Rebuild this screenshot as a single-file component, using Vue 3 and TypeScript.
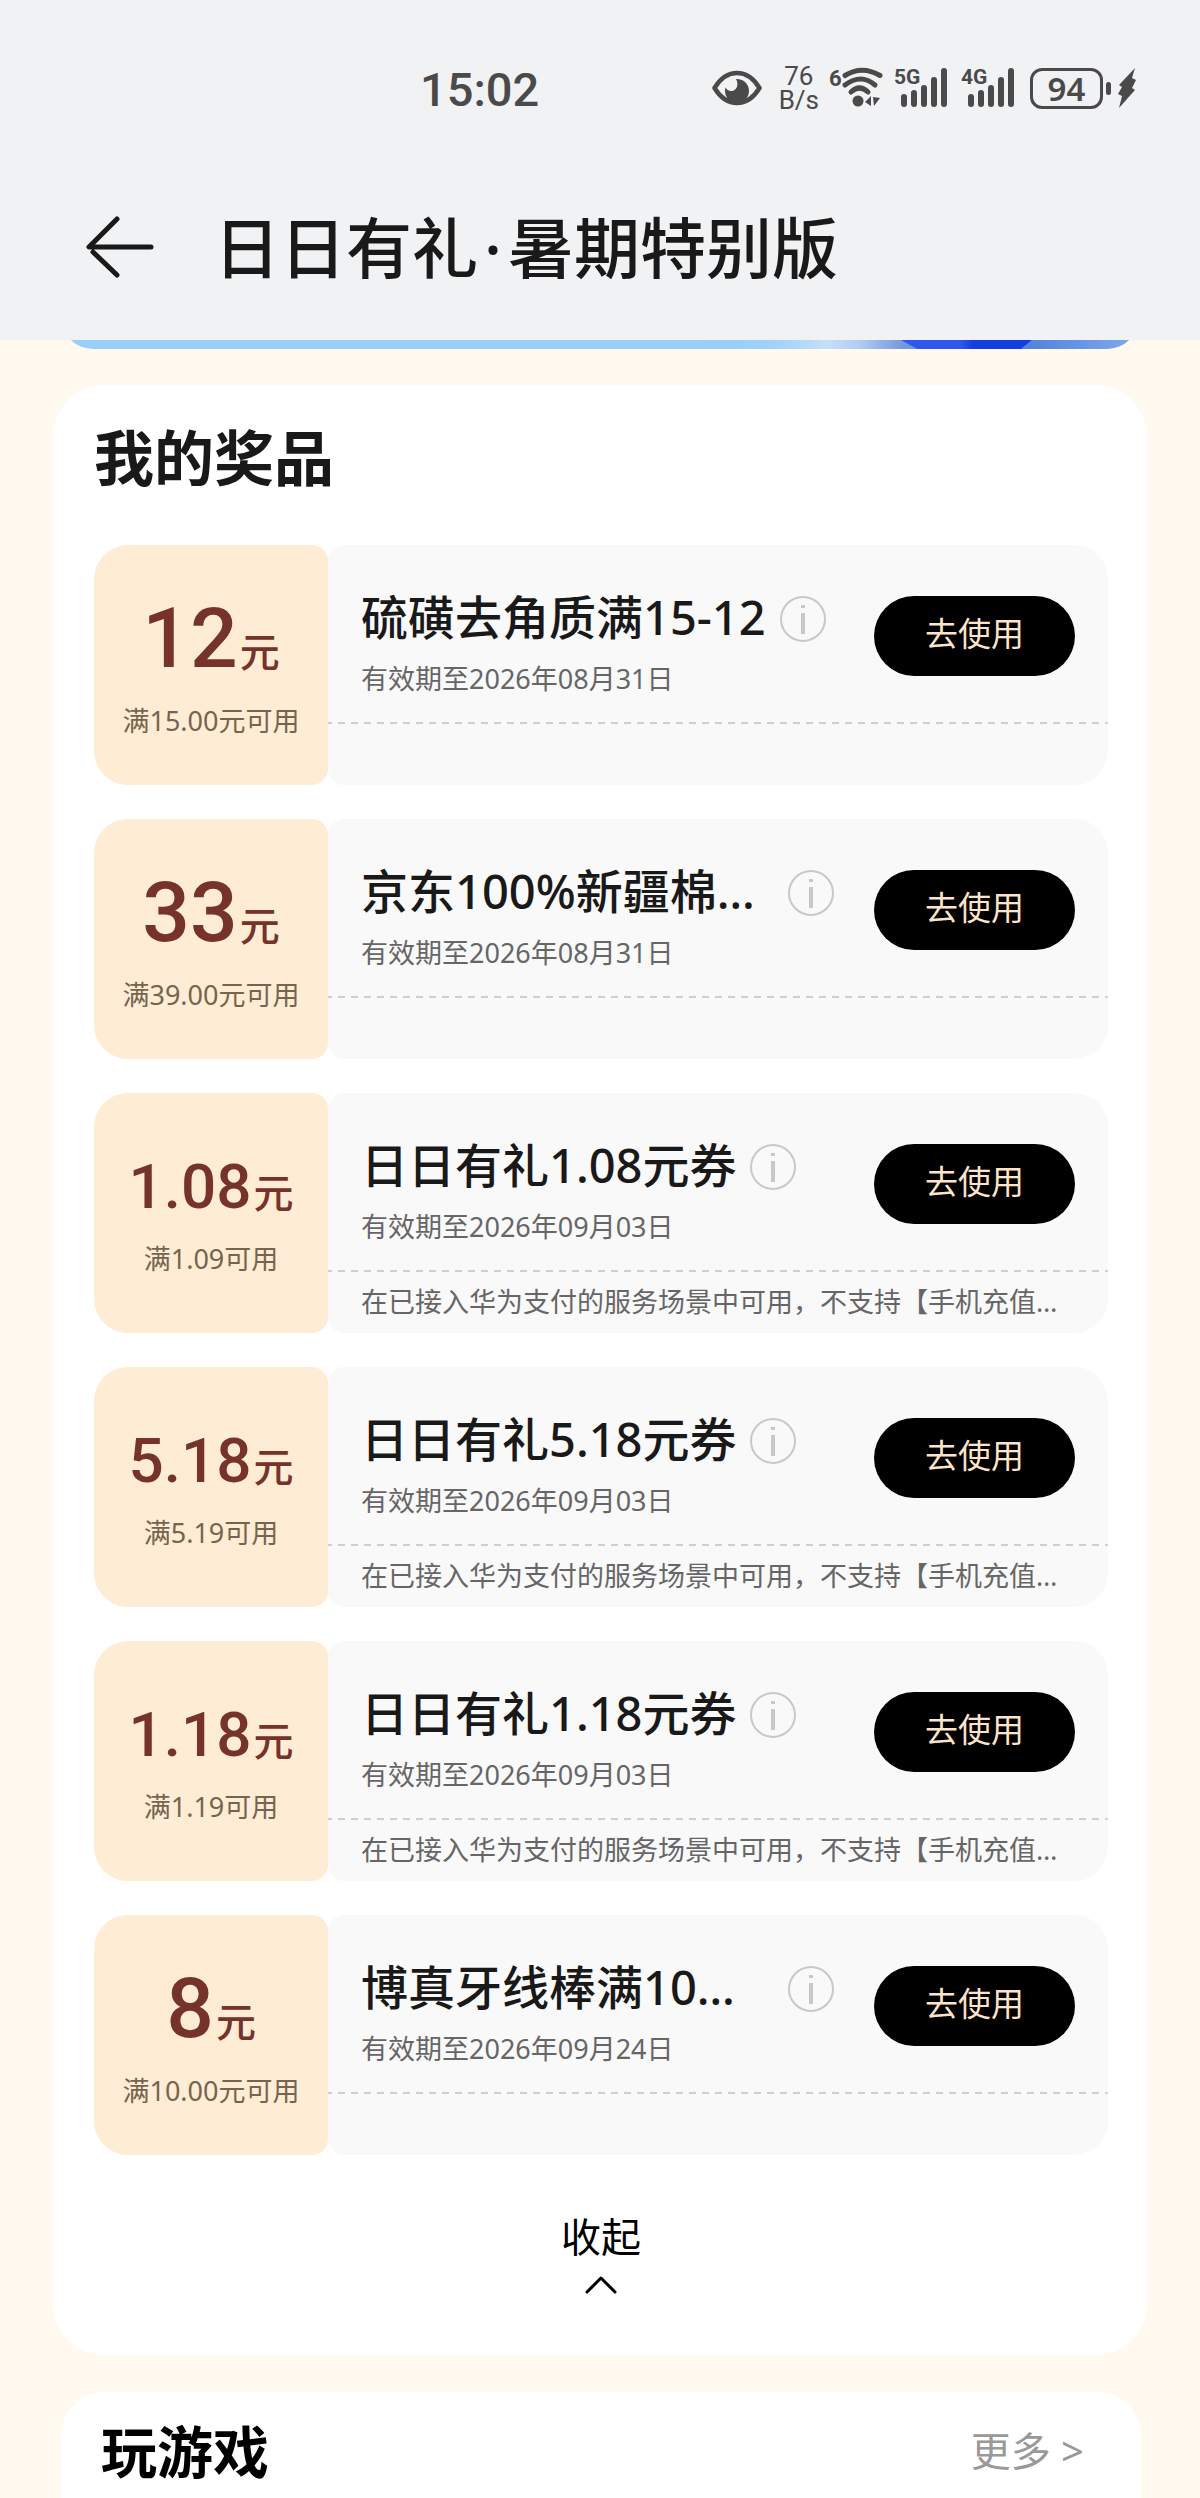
<script setup lang="ts">
interface Coupon {
  amount: string
  condition: string
  title: string
  clipped?: boolean
  expires: string
  note?: string
}

const paymentNote = '在已接入华为支付的服务场景中可用，不支持【手机充值…'

const coupons: Coupon[] = [
  { amount: '12', condition: '满15.00元可用', title: '硫磺去角质满15-12', expires: '2026年08月31日' },
  { amount: '33', condition: '满39.00元可用', title: '京东100%新疆棉…', clipped: true, expires: '2026年08月31日' },
  { amount: '1.08', condition: '满1.09可用', title: '日日有礼1.08元券', expires: '2026年09月03日', note: paymentNote },
  { amount: '5.18', condition: '满5.19可用', title: '日日有礼5.18元券', expires: '2026年09月03日', note: paymentNote },
  { amount: '1.18', condition: '满1.19可用', title: '日日有礼1.18元券', expires: '2026年09月03日', note: paymentNote },
  { amount: '8', condition: '满10.00元可用', title: '博真牙线棒满10…', clipped: true, expires: '2026年09月24日' },
]

const networks = ['5G', '4G']
const bars = [
  { x: 7, y: 28 },
  { x: 17, y: 24 },
  { x: 27, y: 19 },
  { x: 37, y: 11 },
  { x: 47, y: 2 },
]
</script>

<template>
  <div class="page">
    <header class="top">
      <div class="status">
        <span class="clock">15:02</span>
        <div class="indicators">
          <svg class="eye" width="50" height="36" viewBox="0 0 50 36" aria-hidden="true">
            <path d="M2.5 18C8 9 16 3 25 3s17 6 22.500 15C42 27 34 33 25 33S8 27 2.500 18Z" fill="none" stroke="currentColor" stroke-width="4.500" stroke-linejoin="round" />
            <path d="M24 9a12 12 0 1 1-10.500 8.500q2.500 4 6.500 3.500c5-.5 7-7 4-12Z" fill="currentColor" />
          </svg>
          <span class="speed"><span>76</span><span>B/s</span></span>
          <svg class="wifi" width="54" height="44" viewBox="0 0 54 44" aria-hidden="true">
            <text x="0" y="20" font-size="22" font-weight="700" fill="currentColor">6</text>
            <g fill="none" stroke="currentColor" stroke-width="5" stroke-linecap="round">
              <path d="M16 9.500Q33-1 51 9.500" />
              <path d="M16 19q16-12 30 0" />
              <path d="M22 26q8.500-8 17 0" />
            </g>
            <circle cx="29" cy="35" r="5.500" fill="currentColor" />
            <path d="M42 30v10l-6-4zM44 31l7 1-6 8z" fill="currentColor" />
          </svg>
          <svg v-for="net in networks" :key="net" class="signal" width="54" height="44" viewBox="0 0 54 44" aria-hidden="true">
            <text x="0" y="18" font-size="21" font-weight="700" fill="currentColor">{{ net }}</text>
            <rect v-for="bar in bars" :key="bar.x" :x="bar.x" :y="bar.y" width="6" :height="41 - bar.y" rx="3" fill="currentColor" />
          </svg>
          <span class="battery">94</span>
          <svg class="bolt" width="18" height="42" viewBox="0 0 18 42" aria-hidden="true">
            <path d="M17 1 1 18l3 2-4 7 4 2-3 12 16-18-3-2 4-8-4-2z" fill="currentColor" />
          </svg>
        </div>
      </div>
      <div class="nav">
        <button class="back" type="button" aria-label="返回">
          <svg width="68" height="62" viewBox="0 0 68 62" aria-hidden="true">
            <path d="M31 3 3 31h62M7 36l24 23" fill="none" stroke="currentColor" stroke-width="5" stroke-linecap="round" stroke-linejoin="round" />
          </svg>
        </button>
        <h1>日日有礼<span class="dot">·</span>暑期特别版</h1>
      </div>
    </header>

    <div class="banner"><div class="banner-art"><i class="ribbon"></i></div></div>

    <section class="prizes">
      <h2>我的奖品</h2>
      <ul class="coupons">
        <li v-for="coupon in coupons" :key="coupon.title" class="coupon">
          <div class="value">
            <p class="amount" :class="{ long: coupon.amount.length > 2 }">
              <span>{{ coupon.amount }}</span><span class="unit">元</span>
            </p>
            <p class="condition">{{ coupon.condition }}</p>
          </div>
          <div class="detail">
            <div class="main">
              <div class="info">
                <div class="name-row">
                  <h3 :class="{ clipped: coupon.clipped }">{{ coupon.title }}</h3>
                  <button class="about" type="button" aria-label="说明">
                    <svg width="48" height="48" viewBox="0 0 48 48" aria-hidden="true">
                      <circle cx="24" cy="24" r="22" fill="none" stroke="#c8c8c8" stroke-width="2" />
                      <path d="M22 18h4v21h-4zM22 10h4v3h-4z" fill="#c8c8c8" />
                    </svg>
                  </button>
                </div>
                <p class="expires">有效期至{{ coupon.expires }}</p>
              </div>
              <button class="use" type="button">去使用</button>
            </div>
            <svg class="tear" width="100%" height="2" aria-hidden="true">
              <line x1="-3" y1="1" x2="100%" y2="1" stroke="#cfcfcf" stroke-width="2" stroke-dasharray="7 6" />
            </svg>
            <p v-if="coupon.note" class="note">{{ coupon.note }}</p>
          </div>
        </li>
      </ul>
      <button class="collapse" type="button">
        <span>收起</span>
        <svg width="34" height="20" viewBox="0 0 34 20" aria-hidden="true">
          <path d="M3 17 17 3l14 14" fill="none" stroke="currentColor" stroke-width="3" stroke-linecap="round" stroke-linejoin="round" />
        </svg>
      </button>
    </section>

    <section class="games">
      <h2>玩游戏</h2>
      <a href="#games">更多 &gt;</a>
    </section>
  </div>
</template>

<style>
body {
  margin: 0;
  background: #fff9f0;
}
</style>

<style scoped>
.page {
  display: flex;
  flex-direction: column;
  min-height: 100vh;
  font-family: "Noto Sans", "Noto Sans CJK SC", sans-serif;
  color: #191919;
  background: #fff9f0;
}
h1, h2, h3, p, ul {
  margin: 0;
  padding: 0;
}
button {
  padding: 0;
  border: 0;
  background: none;
  color: inherit;
  font-family: inherit;
  cursor: pointer;
}
svg {
  display: block;
  flex: none;
}

.top {
  padding-bottom: 22px;
  background: #f1f2f4;
}
.status {
  display: flex;
  align-items: center;
  justify-content: space-between;
  height: 176px;
  padding: 0 64px 0 420px;
  color: #4a4a4b;
}
.clock {
  padding-top: 2px;
  font-family: Roboto, sans-serif;
  font-size: 47px;
  font-weight: 500;
}
.indicators {
  display: flex;
  align-items: center;
  font-family: Roboto, "Noto Sans", sans-serif;
}
.speed {
  display: flex;
  flex-direction: column;
  align-items: center;
  margin: 0 10px 0 17px;
  font-size: 26px;
  line-height: 24px;
}
.signal {
  margin-left: 11px;
}
.signal + .signal {
  margin-left: 13px;
}
.battery {
  position: relative;
  box-sizing: border-box;
  width: 73px;
  height: 41px;
  margin: 0 15px;
  border: 3px solid;
  border-radius: 12px;
  font-family: "Noto Sans", sans-serif;
  font-size: 33px;
  font-weight: 600;
  line-height: 35px;
  text-align: center;
}
.battery::after {
  content: "";
  position: absolute;
  top: 11px;
  right: -11px;
  width: 5px;
  height: 13px;
  border-radius: 3px;
  background: currentColor;
}
.nav {
  display: flex;
  align-items: center;
  gap: 60px;
  height: 142px;
  padding: 0 86px;
}
h1 {
  font-size: 66px;
  font-weight: 500;
  line-height: 88px;
}
.dot {
  display: inline-block;
  width: 30px;
  text-align: center;
}

.banner {
  display: flex;
  align-items: flex-end;
  height: 9px;
  margin: 0 61px;
  overflow: hidden;
}
.banner-art {
  flex: 1;
  height: 120px;
  border-radius: 32px;
  overflow: hidden;
  background: linear-gradient(90deg, #99cdfb 60%, #9ed2fb 66%, #c6dff8 71%, #b2cdf4 74%, #7898df 78%, #5283de 90%, #82aaf0);
}
.ribbon {
  display: block;
  width: 12%;
  height: 100%;
  margin-left: 78%;
  background: linear-gradient(90deg, #2f59ee 45%, #143fdf 55%);
  clip-path: polygon(0 0, 100% 0, 100% 93%, 92% 100%, 12% 100%, 0 93%);
}

.prizes {
  margin: 36px 53px 37px;
  padding: 29px 39px 60px 41px;
  border-radius: 52px;
  background: #fff;
}
h2 {
  font-size: 60px;
  font-weight: 700;
  line-height: 88px;
}
.coupons {
  display: flex;
  flex-direction: column;
  gap: 34px;
  margin-top: 43px;
  list-style: none;
}
.coupon {
  display: flex;
  height: 240px;
}
.value {
  display: flex;
  flex: none;
  flex-direction: column;
  align-items: center;
  justify-content: center;
  width: 234px;
  border-radius: 34px 16px 16px 34px;
  background: #feecd5;
}
.amount {
  display: flex;
  align-items: baseline;
  gap: 2px;
  margin-top: 2px;
  color: #75332a;
  font-family: Roboto, "Noto Sans CJK SC", sans-serif;
  font-size: 84px;
  font-weight: 500;
  line-height: 92px;
}
.amount.long {
  font-size: 62px;
  line-height: 72px;
}
.unit {
  font-size: 40px;
  line-height: 40px;
}
.condition {
  margin-top: 18px;
  color: #76644f;
  font-size: 27px;
  line-height: 36px;
}
.detail {
  flex: 1;
  min-width: 0;
  border-radius: 16px 34px 34px 16px;
  background: #f9f9f9;
}
.main {
  display: flex;
  align-items: flex-start;
  justify-content: space-between;
  height: 177px;
  padding: 0 33px;
}
.info {
  width: 474px;
  padding-top: 40px;
}
.name-row {
  display: flex;
  align-items: center;
  gap: 13px;
}
.about {
  margin-top: 4px;
}
h3 {
  font-size: 47px;
  font-weight: 500;
  line-height: 64px;
  white-space: nowrap;
}
h3.clipped {
  flex: 1;
}
.expires {
  margin-top: 12px;
  color: #666;
  font-size: 27px;
  line-height: 36px;
}
.use {
  width: 201px;
  height: 80px;
  margin-top: 51px;
  padding-bottom: 8px;
  border-radius: 40px;
  background: #000;
  color: #fde3c8;
  font-size: 33px;
}
.note {
  margin-left: 33px;
  padding-top: 12px;
  color: #666;
  font-size: 27px;
  line-height: 36px;
  white-space: nowrap;
}
.collapse {
  display: flex;
  flex-direction: column;
  align-items: center;
  gap: 8px;
  margin: 52px auto 0;
  color: #000;
  font-size: 40px;
  line-height: 60px;
}

.games {
  display: flex;
  flex: 1;
  align-items: flex-start;
  justify-content: space-between;
  margin: 0 59px 0 61px;
  padding: 15px 57px 0 40px;
  border-radius: 44px 44px 0 0;
  background: #fff;
}
.games h2 {
  color: #000;
  font-size: 56px;
}
.games a {
  color: #999;
  font-size: 40px;
  line-height: 88px;
  text-decoration: none;
}
</style>
